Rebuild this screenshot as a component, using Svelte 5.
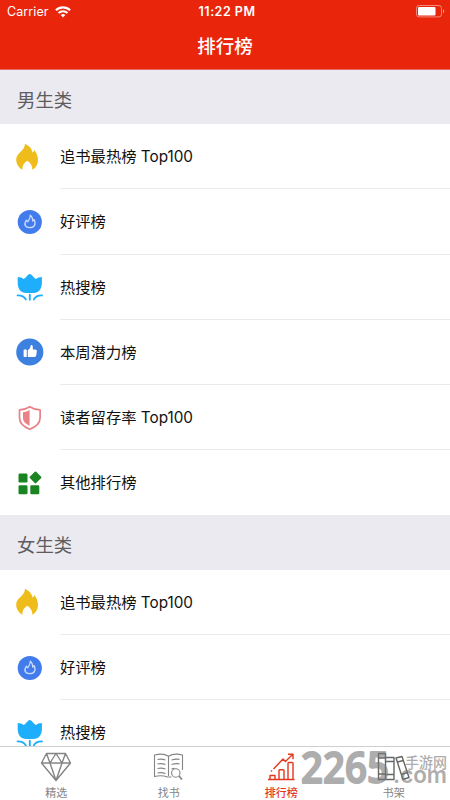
<script lang="ts">
  type Row = { icon: string; label: string };
  type Section = { title: string; rows: Row[] };

  const rows: Row[] = [
    { icon: "flame", label: "追书最热榜 Top100" },
    { icon: "praise", label: "好评榜" },
    { icon: "tulip", label: "热搜榜" },
    { icon: "thumb", label: "本周潜力榜" },
    { icon: "shield", label: "读者留存率 Top100" },
    { icon: "grid", label: "其他排行榜" },
  ];

  const sections: Section[] = [
    { title: "男生类", rows },
    { title: "女生类", rows: rows.slice(0, 3) },
  ];

  const tabs = [
    { id: "picks", label: "精选" },
    { id: "search", label: "找书" },
    { id: "rank", label: "排行榜" },
    { id: "shelf", label: "书架" },
  ];

  let active = $state("rank");
</script>

<div class="screen">
  <header>
    <div class="status-bar">
      <div class="carrier">
        <span>Carrier</span>
        <svg width="16" height="12" viewBox="0 0 16 12" fill="none" stroke="#fff" stroke-width="2.1">
          <path d="M.9 4.3a10.2 10.2 0 0 1 14.2 0M3.5 7.1a6.4 6.4 0 0 1 9 0" />
          <path d="M8 11.5 5.7 9.1a3.3 3.3 0 0 1 4.6 0z" fill="#fff" stroke="none" />
        </svg>
      </div>
      <span class="time">11:22 PM</span>
      <svg class="battery" width="29" height="13" viewBox="0 0 29 13">
        <rect x=".5" y=".5" width="25" height="11.4" rx="2.6" fill="none" stroke="#fff" stroke-opacity=".45" />
        <rect x="2" y="2" width="17.5" height="8.4" rx="1" fill="#fff" />
        <path d="M27 4.2c1.8.6 1.8 3.4 0 4z" fill="#fff" opacity=".5" />
      </svg>
    </div>
    <h1>排行榜</h1>
  </header>

  <main>
    {#each sections as section}
      <section>
        <h2>{section.title}</h2>
        <ul>
          {#each section.rows as row}
            <li>
              <svg class="row-icon" width="32" height="32" viewBox="0 0 32 32">
                {#if row.icon === "flame"}
                  <path
                    fill="#efbd1b"
                    d="M11 2.8c4.2 2 6.8 4.7 7.6 8.7 1-.6 1.7-1.5 1.9-2.8 1.2 2.7 3.5 5.6 3.5 9.8 0 4.8-2.3 8.6-5.7 10.3.3-3.7-1.7-6.9-4.9-9-3.4 2-5.3 5.3-4.9 9C4.7 26.8 2.2 23 2.2 18.5 2.2 11.8 10.8 10.3 11 2.8z"
                  />
                {:else if row.icon === "praise"}
                  <circle cx="15.8" cy="16" r="12.1" fill="#427cec" />
                  <path
                    fill="none"
                    stroke="#c9dcff"
                    stroke-width="1.3"
                    stroke-linejoin="round"
                    d="M16.3 9.2c.4 3-1.7 4.600-2.500 6.600l-1.500-1.500c-3 4.300-.8 7.400 3.400 7.400 4.700 0 6.600-3.500 4.400-8.100l-1.400 1.500c.1-2.600-.5-4.500-2.400-5.900z"
                  />
                {:else if row.icon === "tulip"}
                  <path
                    fill="#1eaefc"
                    d="M3.7 5.9c2.6.1 4.5.8 6 2 1.6-.8 2.7-2.300 4.500-4.200 1-1 2.200-1 3.200 0 1.800 1.900 2.900 3.400 4.500 4.200 1.500-1.200 3.400-1.900 6-2v5.900c0 6.400-3.200 10.200-8.600 10.200h-7c-5.400 0-8.600-3.800-8.600-10.200z"
                  />
                  <path
                    fill="none"
                    stroke="#1eaefc"
                    stroke-width="1.9"
                    stroke-linecap="round"
                    d="M15.8 23.8v5M3.6 24.4c4-.1 6.700 1.300 8.200 4M28 24.400c-4-.1-6.700 1.300-8.200 4"
                  />
                {:else if row.icon === "thumb"}
                  <circle cx="15.8" cy="16" r="13.6" fill="#3c81df" />
                  <rect x="9.6" y="13.6" width="3.2" height="7.4" rx=".8" fill="#fff" />
                  <path
                    fill="#fff"
                    d="M13.8 14c2.200-.8 2.600-2.900 2.800-4.300.3-1.200 2.200-.7 2.200 1.100v2.700h2.200c1.500 0 2 .8 1.800 2l-.6 4.100c-.2.900-.8 1.400-1.700 1.400h-6.700z"
                  />
                {:else if row.icon === "shield"}
                  <path
                    fill="none"
                    stroke="#e98186"
                    stroke-width="1.7"
                    stroke-linejoin="round"
                    d="M15.8 4.7c3 2 6.4 3.1 10.3 3.2v7.9c0 5.4-4 9-10.3 11.5C9.5 24.8 5.5 21.2 5.5 15.8V7.9c3.9-.1 7.3-1.2 10.3-3.2z"
                  />
                  <path fill="#e98186" d="M15.6 8v15.8c-4.1-1.9-6.6-4.4-6.6-8V10.3c2.3-.4 4.7-1.1 6.6-2.3z" />
                {:else}
                  <g fill="#1b8422">
                    <rect x="4.5" y="6.6" width="9" height="9" rx="1.3" />
                    <rect x="4.5" y="18.3" width="9" height="9" rx="1.3" />
                    <rect x="16.3" y="18.3" width="9" height="9" rx="1.3" />
                    <rect x="17" y="5.9" width="9" height="9" rx="1" transform="rotate(45 21.5 10.4)" />
                  </g>
                {/if}
              </svg>
              <span class="label">{row.label}</span>
            </li>
          {/each}
        </ul>
      </section>
    {/each}
  </main>

  <nav>
    {#each tabs as tab}
      <button type="button" class:active={active === tab.id} onclick={() => (active = tab.id)}>
        <svg width="34" height="32" viewBox="0 0 34 32" fill="none" stroke="currentColor" stroke-width="1.1" stroke-linejoin="round">
          {#if tab.id === "picks"}
            <path stroke-width="1.4" d="M7.5 2.5h19l5 9.5L17 29.5 2.5 12z M2.5 12h29M7.5 2.5l3.5 9.5 6-9.5 6 9.5 3.5-9.5M11 12l6 17.5L23 12" />
          {:else if tab.id === "search"}
            <path d="M16.5 5.2C13 3 8 2.5 2.5 4v21.5c5-1.2 9-1 13 .5h4M16.5 5.2C20 3 25 2.5 30.5 4v15M16.5 5.2V25M5.5 8.5c3-.7 5.5-.4 8 .6M5.5 13c3-.7 5.5-.4 8 .6M5.5 17.5c3-.7 5.5-.4 8 .6M5.5 22c3-.7 5.5-.4 8 .6M19.5 9c3-1 5.5-1.2 8-.6M19.5 13.5c3-1 5.5-1.2 8-.6M19.5 18c1-.4 2-.6 3-.7" />
            <circle cx="23.8" cy="22" r="4.2" />
            <path d="m27 25 3 3.5" stroke-width="1.8" />
          {:else if tab.id === "rank"}
            <path stroke-width="1.4" d="M4 28.5h26.5M6 28v-3.5h5V28M15 28v-8.5q0-.8.8-.8h3.4q.8 0 .8.8V28M24 28V12.300q0-.8.8-.8h3.4q.8 0 .8.8V28M9.500 18l9.500-10 2.500 2.500 7-7M24 3.200h5v5M7 20.500l1-1" />
          {:else}
            <path stroke="#666" stroke-width="1.4" d="M1.5 2.5h7v26h-7zM8.5 6.500H17v22H8.500zM1.500 7h7M1.500 23h7M8.500 10.500H17M8.500 23.500H17M19 7l6-1.500 7 21-6 2zM20.500 11l6-1.500M24.500 23.500l6-1.800" />
          {/if}
        </svg>
        <span>{tab.label}</span>
      </button>
    {/each}
  </nav>

  <svg class="watermark" width="152" height="54" viewBox="0 0 152 54">
    <text class="digits" x="3" y="37" textLength="88" lengthAdjust="spacingAndGlyphs">2265</text>
    <text class="site" x="107" y="22" textLength="42" lengthAdjust="spacingAndGlyphs">手游网</text>
    <text class="domain" x="95" y="36.5" textLength="54" lengthAdjust="spacingAndGlyphs">.com</text>
  </svg>
</div>

<style>
  :global(body) {
    margin: 0;
  }

  .screen {
    position: relative;
    display: flex;
    flex-direction: column;
    width: 450px;
    height: 800px;
    overflow: hidden;
    background: #fff;
    color: #111;
    font-family: Inter, "Noto Sans CJK SC", sans-serif;
  }

  header {
    flex: none;
    box-sizing: border-box;
    height: 70px;
    background: #e9260c;
    border-bottom: 1px solid #e56a66;
    color: #fff;
  }

  .status-bar {
    display: grid;
    grid-template-columns: 1fr auto 1fr;
    align-items: center;
    height: 23px;
    padding: 0 5px 0 7px;
    font-size: 12.5px;
  }

  .carrier {
    display: flex;
    align-items: center;
    gap: 6px;
    letter-spacing: 0.1px;
  }

  .time {
    padding-left: 2px;
    font-weight: 600;
    letter-spacing: 0.5px;
  }

  .battery {
    justify-self: end;
  }

  h1 {
    margin: 0;
    font-size: 18.5px;
    font-weight: 500;
    line-height: 47px;
    text-align: center;
  }

  main {
    flex: 1;
    min-height: 0;
    overflow: hidden;
  }

  h2 {
    margin: 0;
    padding-left: 17px;
    height: 54.3px;
    background: #ebeaf0;
    color: #5d5d61;
    font-size: 18.4px;
    font-weight: 400;
    line-height: 61px;
  }

  ul {
    margin: 0;
    padding: 0;
    list-style: none;
  }

  li {
    display: flex;
    align-items: center;
    height: 65.2px;
    padding-left: 14px;
  }

  .row-icon {
    flex: none;
    margin-right: 14px;
  }

  .label {
    flex: 1;
    box-sizing: border-box;
    height: 100%;
    border-bottom: 1px solid #ebebed;
    font-size: 15.3px;
    line-height: 66px;
  }

  li:last-child .label {
    border-bottom: 0;
  }

  nav {
    flex: none;
    display: grid;
    grid-template-columns: repeat(4, 1fr);
    box-sizing: border-box;
    height: 54px;
    border-top: 1px solid #cfcfcf;
    background: #fff;
  }

  button {
    display: flex;
    flex-direction: column;
    align-items: center;
    padding: 4px 0 0;
    border: 0;
    background: none;
    color: #858585;
    font: inherit;
    font-size: 11px;
    line-height: 16px;
  }

  button span {
    margin-top: 2px;
  }

  button.active {
    color: #e3371e;
  }

  button.active span {
    font-weight: 500;
  }

  .watermark {
    position: absolute;
    right: 0;
    bottom: 0;
    overflow: visible;
    fill: #777;
    opacity: 0.6;
    pointer-events: none;
  }

  .digits {
    font-family: "Open Sans", sans-serif;
    font-size: 44px;
    font-weight: 600;
    stroke: #777;
    stroke-width: 2px;
    stroke-linejoin: round;
  }

  .site {
    font-size: 15px;
    font-weight: 500;
  }

  .domain {
    font-size: 23px;
    font-weight: 600;
  }
</style>
